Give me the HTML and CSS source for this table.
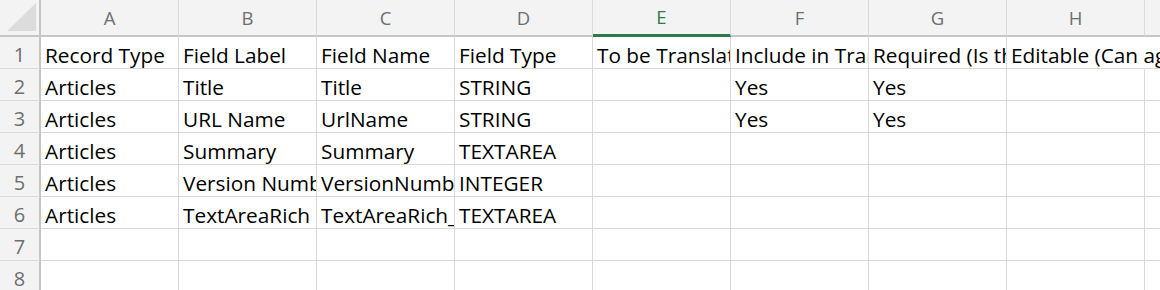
FILE: index.html
```html
<!DOCTYPE html>
<html lang="en">
<head>
<meta charset="utf-8">
<title>Sheet</title>
<link rel="stylesheet" href="styles.css">
</head>
<body>
<div class="sheet">
  <div class="row head">
    <div class="corner"><svg width="39" height="35" viewBox="0 0 39 35"><polygon points="7,31 36,31 36,3" fill="#dcdcdc"/></svg></div>
    <div class="colh">A</div>
    <div class="colh">B</div>
    <div class="colh">C</div>
    <div class="colh">D</div>
    <div class="colh sel">E</div>
    <div class="colh">F</div>
    <div class="colh">G</div>
    <div class="colh">H</div>
    <div class="colh">I</div>
  </div>
  <div class="row">
    <div class="rowh">1</div>
    <div class="cell">Record Type</div>
    <div class="cell">Field Label</div>
    <div class="cell">Field Name</div>
    <div class="cell">Field Type</div>
    <div class="cell">To be Translated</div>
    <div class="cell">Include in Translation</div>
    <div class="cell">Required (Is this field required?)</div>
    <div class="cell spill">Editable (Can agent edit?)</div>
    <div class="cell"></div>
  </div>
  <div class="row">
    <div class="rowh">2</div>
    <div class="cell">Articles</div>
    <div class="cell">Title</div>
    <div class="cell">Title</div>
    <div class="cell">STRING</div>
    <div class="cell"></div>
    <div class="cell">Yes</div>
    <div class="cell">Yes</div>
    <div class="cell"></div>
    <div class="cell"></div>
  </div>
  <div class="row">
    <div class="rowh">3</div>
    <div class="cell">Articles</div>
    <div class="cell">URL Name</div>
    <div class="cell">UrlName</div>
    <div class="cell">STRING</div>
    <div class="cell"></div>
    <div class="cell">Yes</div>
    <div class="cell">Yes</div>
    <div class="cell"></div>
    <div class="cell"></div>
  </div>
  <div class="row">
    <div class="rowh">4</div>
    <div class="cell">Articles</div>
    <div class="cell">Summary</div>
    <div class="cell">Summary</div>
    <div class="cell">TEXTAREA</div>
    <div class="cell"></div>
    <div class="cell"></div>
    <div class="cell"></div>
    <div class="cell"></div>
    <div class="cell"></div>
  </div>
  <div class="row">
    <div class="rowh">5</div>
    <div class="cell">Articles</div>
    <div class="cell">Version Number</div>
    <div class="cell">VersionNumber</div>
    <div class="cell">INTEGER</div>
    <div class="cell"></div>
    <div class="cell"></div>
    <div class="cell"></div>
    <div class="cell"></div>
    <div class="cell"></div>
  </div>
  <div class="row">
    <div class="rowh">6</div>
    <div class="cell">Articles</div>
    <div class="cell">TextAreaRich</div>
    <div class="cell">TextAreaRich__c</div>
    <div class="cell">TEXTAREA</div>
    <div class="cell"></div>
    <div class="cell"></div>
    <div class="cell"></div>
    <div class="cell"></div>
    <div class="cell"></div>
  </div>
  <div class="row">
    <div class="rowh">7</div>
    <div class="cell"></div>
    <div class="cell"></div>
    <div class="cell"></div>
    <div class="cell"></div>
    <div class="cell"></div>
    <div class="cell"></div>
    <div class="cell"></div>
    <div class="cell"></div>
    <div class="cell"></div>
  </div>
  <div class="row">
    <div class="rowh">8</div>
    <div class="cell"></div>
    <div class="cell"></div>
    <div class="cell"></div>
    <div class="cell"></div>
    <div class="cell"></div>
    <div class="cell"></div>
    <div class="cell"></div>
    <div class="cell"></div>
    <div class="cell"></div>
  </div>
</div>
</body>
</html>
```
FILE: styles.css
```css
html, body {
  margin: 0;
  padding: 0;
  background: #ffffff;
  overflow: hidden;
}
body {
  width: 1160px;
  height: 290px;
  font-family: "Open Sans", "Noto Sans", sans-serif;
}
.sheet {
  display: flex;
  flex-direction: column;
  width: 1283px;
}
.row {
  display: flex;
  flex: none;
}
.row > div {
  box-sizing: border-box;
  flex: none;
}
.head {
  height: 37px;
}
.corner {
  width: 41px;
  height: 37px;
  background: #f3f3f3;
  border-right: 2px solid #c6c6c6;
  border-bottom: 2px solid #c6c6c6;
}
.corner svg {
  display: block;
}
.colh {
  width: 138px;
  height: 37px;
  background: #f3f3f3;
  border-right: 1px solid #dadada;
  border-bottom: 2px solid #c6c6c6;
  color: #6e6e6e;
  font-size: 18.5px;
  line-height: 35px;
  text-align: center;
}
.colh.sel {
  color: #2d7a4b;
  border-bottom: 3px solid #2d7a4b;
  line-height: 34px;
}
.rowh {
  width: 41px;
  height: 32px;
  background: #f3f3f3;
  border-right: 2px solid #c6c6c6;
  border-bottom: 1px solid #dadada;
  color: #6e6e6e;
  font-size: 20px;
  line-height: 28px;
  padding-top: 4px;
  text-align: center;
}
.cell {
  width: 138px;
  height: 32px;
  border-right: 1px solid #d9d9d9;
  border-bottom: 1px solid #d9d9d9;
  padding: 4px 0 0 4px;
  font-size: 20.8px;
  line-height: 28px;
  color: #000000;
  white-space: nowrap;
  overflow: hidden;
}
.cell.spill {
  overflow: visible;
  border-right-color: transparent;
}
```
